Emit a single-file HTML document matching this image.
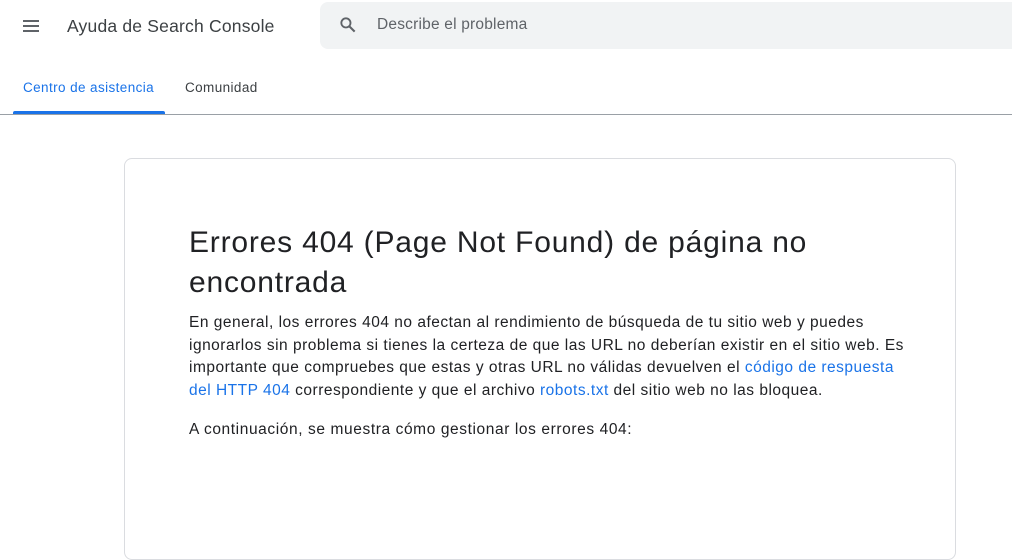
<!DOCTYPE html>
<html><head><meta charset="utf-8"><style>
body{margin:0;width:1012px;height:443px;overflow:hidden;background:#fff;font-family:"Liberation Sans",Arial,sans-serif;position:relative;color:#202124}
.a{position:absolute;white-space:nowrap}
.ln{position:absolute;height:2px;left:23px;width:16px;background:#5f6368}
a{color:#1a73e8;text-decoration:none}
</style></head><body>
<div class="ln" style="top:20px"></div><div class="ln" style="top:25px"></div><div class="ln" style="top:30px"></div>
<div class="a" style="left:67px;top:16px;font-size:17.5px;letter-spacing:0.2px;color:#3c4043">Ayuda de Search Console</div>
<div class="a" style="left:320px;top:2px;width:700px;height:47px;background:#f1f3f4;border-radius:8px"></div>
<svg class="a" style="left:338px;top:15px" width="20" height="20" viewBox="0 0 24 24"><circle cx="9.5" cy="9.5" r="5.5" fill="none" stroke="#5f6368" stroke-width="2.2"/><path d="M13.5 13.5L20 20" stroke="#5f6368" stroke-width="2.5"/></svg>
<div class="a" style="left:377px;top:16px;font-size:15.5px;letter-spacing:0.2px;color:#5f6368">Describe el problema</div>
<div class="a" style="left:23px;top:80px;font-size:13.5px;letter-spacing:0.4px;color:#1a73e8">Centro de asistencia</div>
<div class="a" style="left:185px;top:80px;font-size:13.5px;letter-spacing:0.4px;color:#3c4043">Comunidad</div>
<div class="a" style="left:13px;top:111px;width:152px;height:3px;background:#1a73e8;border-radius:2px 2px 0 0"></div>
<div class="a" style="left:0;top:114px;width:1012px;height:1px;background:#9aa0a6"></div>
<div class="a" style="left:124px;top:158px;width:830px;height:400px;border:1px solid #dadce0;border-radius:8px"></div>
<div class="a" style="left:189px;top:223px;font-size:30px;letter-spacing:0.8px;line-height:40px;color:#202124">Errores 404 (Page Not Found) de página no<br>encontrada</div>
<div class="a" style="left:189px;top:312px;font-size:15.5px;letter-spacing:0.5px;line-height:22.6px;color:#202124">En general, los errores 404 no afectan al rendimiento de búsqueda de tu sitio web y puedes<br>ignorarlos sin problema si tienes la certeza de que las URL no deberían existir en el sitio web. Es<br>importante que compruebes que estas y otras URL no válidas devuelven el <a>código de respuesta</a><br><a>del HTTP 404</a> correspondiente y que el archivo <a>robots.txt</a> del sitio web no las bloquea.</div>
<div class="a" style="left:189px;top:419px;font-size:15.5px;letter-spacing:0.6px;line-height:22.6px">A continuación, se muestra cómo gestionar los errores 404:</div>
</body></html>
